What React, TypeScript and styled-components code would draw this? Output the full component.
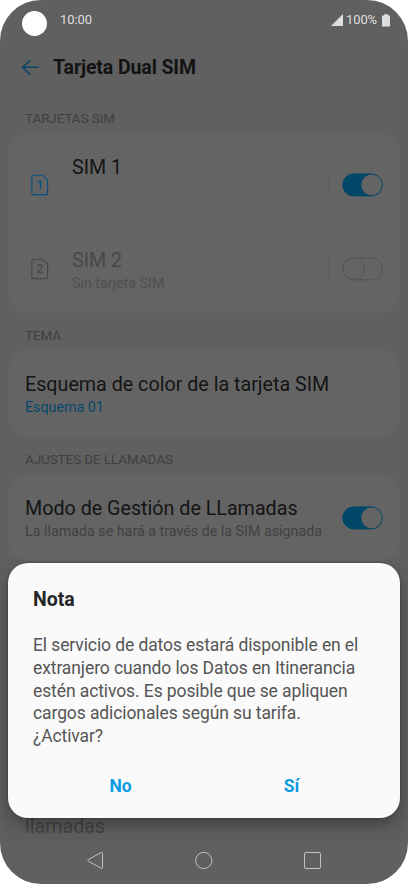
import React from "react";
import styled, { createGlobalStyle } from "styled-components";

const GlobalStyle = createGlobalStyle`
  * { box-sizing: border-box; }
  html, body { margin: 0; padding: 0; background: #fff; }
  body { font-family: Roboto, "Liberation Sans", sans-serif; overflow: hidden; }
`;

const Phone = styled.div`
  position: relative;
  display: flex;
  flex-direction: column;
  width: 408px;
  height: 884px;
  overflow: hidden;
  border-radius: 41px;
  background: #606060;
`;

const StatusBar = styled.header`
  display: flex;
  align-items: center;
  flex: none;
  height: 40px;
  padding: 0 17px 0 22px;
  color: #dedede;
  font-size: 13px;
  line-height: 16px;
`;

const Camera = styled.span`
  width: 25px;
  height: 25px;
  margin: 6px 13px 0 0;
  border-radius: 50%;
  background: #fff;
`;

const Clock = styled.span`
  flex: 1;
  font-size: 13px;
  letter-spacing: -0.1px;
`;

const Battery = styled.span`
  width: 31px;
  margin: 0 5px 0 3px;
  white-space: nowrap;
  font-size: 13px;
  letter-spacing: -0.1px;
`;

const TitleBar = styled.div`
  display: flex;
  align-items: center;
  flex: none;
  height: 56px;
  padding-left: 21px;
  gap: 13px;
`;

const PageTitle = styled.h1`
  margin: 0;
  color: #131313;
  font-size: 19.5px;
  line-height: 24px;
  letter-spacing: -0.1px;
  font-weight: 700;
`;

const SectionLabel = styled.h2<{ $height: number }>`
  display: flex;
  align-items: flex-end;
  flex: none;
  height: ${(p) => p.$height}px;
  margin: 0;
  padding: 0 25px 7px;
  color: #3f3f3f;
  font-size: 13.5px;
  line-height: 16px;
  letter-spacing: -0.1px;
  font-weight: 400;
`;

const Card = styled.section<{ $height: number }>`
  display: flex;
  flex-direction: column;
  flex: none;
  height: ${(p) => p.$height}px;
  margin: 0 8px;
  border-radius: 21px;
  background: #646464;
`;

const SimRow = styled.div<{ $height: number; $top: number }>`
  display: grid;
  grid-template-columns: 47px 1fr 14px 41px;
  height: ${(p) => p.$height}px;
  padding: ${(p) => p.$top}px 17px 0;
`;

const SimIconCell = styled.div`
  padding: 18px 0 0 6px;
`;

const Divider = styled.div`
  flex: none;
  height: 1px;
  margin: 0 18px 0 62px;
  background: #606060;
`;

const SwitchRule = styled.div`
  width: 1px;
  height: 28px;
  margin-top: 15px;
  background: #5f5f5f;
`;

const SwitchCell = styled.div`
  padding-top: 17px;
`;

const SettingRow = styled.div`
  display: flex;
  align-items: center;
  justify-content: space-between;
  height: 87px;
  padding: 0 17px;
`;

const TextStack = styled.div<{ $top?: number }>`
  padding-top: ${(p) => p.$top ?? 3}px;
  white-space: nowrap;
`;

const ItemTitle = styled.div<{ $muted?: boolean }>`
  color: ${(p) => (p.$muted ? "#484848" : "#141414")};
  font-size: 19.7px;
  line-height: 24px;
`;

const ItemDetail = styled.div<{ $color: string }>`
  color: ${(p) => p.$color};
  font-size: 14.27px;
  line-height: 20px;
`;

const HiddenTop = styled.div`
  flex: 1;
`;

const LastItem = styled.div`
  flex: none;
  height: 22px;
  padding: 0 17px;
`;

const NavBar = styled.nav`
  display: flex;
  justify-content: space-between;
  flex: none;
  padding: 14px 86px 0;
`;

const Dialog = styled.section`
  position: absolute;
  left: 8px;
  right: 8px;
  top: 563px;
  height: 254.5px;
  display: flex;
  flex-direction: column;
  border-radius: 20px;
  background: #fafafa;
  box-shadow: 0 0 2px rgba(0, 0, 0, 0.35), 0 10px 18px rgba(0, 0, 0, 0.34);
`;

const DialogTitle = styled.h2`
  margin: 25px 25px 0;
  color: #262626;
  font-size: 19.5px;
  line-height: 24px;
  font-weight: 700;
`;

const DialogText = styled.p`
  margin: 22px 25px 0;
  color: #555;
  font-size: 17.5px;
  line-height: 22.75px;
  letter-spacing: -0.1px;
  white-space: nowrap;
`;

const DialogActions = styled.div`
  display: grid;
  grid-template-columns: 171px 171px;
  margin: 26px 27px 0;
`;

const DialogButton = styled.button`
  padding: 0;
  border: 0;
  background: none;
  color: #0a9be3;
  font: 700 17.5px/24px Roboto, sans-serif;
`;

function Switch({ on = false }: { on?: boolean }) {
  return (
    <svg width="41" height="24" viewBox="0 0 41 24" fill="none" display="block">
      <rect x="0.8" y="0.9" width="39.5" height="22" rx="11" fill={on ? "#004768" : "none"} stroke={on ? "#004768" : "#535353"} strokeWidth={on ? 1 : 0.9} />
      <circle cx={on ? 29.6 : 11.7} cy="11.9" r={on ? 10.3 : 10.8} fill="#646464" stroke={on ? "none" : "#535353"} strokeWidth="0.9" />
    </svg>
  );
}

function SimIcon({ label, color }: { label: string; color: string }) {
  return (
    <svg width="18" height="22" viewBox="0 0 18 22" fill="none" display="block">
      <path d="M2 1.2h9.7L16.6 6v13.3q0 1.3-1.3 1.3H2.2q-1.3 0-1.3-1.3V2.2q0-1 1.1-1Z" stroke={color} strokeWidth="1.1" />
      <text x="8.8" y="15.3" textAnchor="middle" fill={color} fontFamily="Roboto" fontSize="12" fontWeight="500">{label}</text>
    </svg>
  );
}

export default function App() {
  return (
    <>
      <GlobalStyle />
      <Phone>
        <StatusBar>
          <Camera />
          <Clock>10:00</Clock>
          <svg width="12" height="12" viewBox="0 0 12 12"><path d="M0 12 12 0v12Z" fill="#dedede" /></svg>
          <Battery>100%</Battery>
          <svg width="9" height="13" viewBox="0 0 9 13"><path d="M0 1.5h2V.3h4v1.2h2v11H0Z" fill="#dedede" /></svg>
        </StatusBar>
        <TitleBar>
          <svg width="19" height="18" viewBox="0 0 19 18" fill="none"><path d="M9.4 1.2 1.6 8.3l7.8 7.6M1.6 8.3h16" stroke="#084563" strokeWidth="1.5" /></svg>
          <PageTitle>Tarjeta Dual SIM</PageTitle>
        </TitleBar>
        <SectionLabel $height={36.5}>TARJETAS SIM</SectionLabel>
        <Card $height={180}>
          <SimRow $height={98.5} $top={23.5}>
            <SimIconCell><SimIcon label="1" color="#074f80" /></SimIconCell>
            <ItemTitle>SIM 1</ItemTitle>
            <SwitchRule />
            <SwitchCell><Switch on /></SwitchCell>
          </SimRow>
          <Divider />
          <SimRow $height={80} $top={8}>
            <SimIconCell><SimIcon label="2" color="#474747" /></SimIconCell>
            <TextStack $top={9}>
              <ItemTitle $muted>SIM 2</ItemTitle>
              <ItemDetail $color="#505050">Sin tarjeta SIM</ItemDetail>
            </TextStack>
            <SwitchRule />
            <SwitchCell><Switch /></SwitchCell>
          </SimRow>
        </Card>
        <SectionLabel $height={37.5}>TEMA</SectionLabel>
        <Card $height={87}>
          <SettingRow>
            <TextStack>
              <ItemTitle>Esquema de color de la tarjeta SIM</ItemTitle>
              <ItemDetail $color="#04496b">Esquema 01</ItemDetail>
            </TextStack>
          </SettingRow>
        </Card>
        <SectionLabel $height={37}>AJUSTES DE LLAMADAS</SectionLabel>
        <Card $height={87}>
          <SettingRow>
            <TextStack>
              <ItemTitle>Modo de Gestión de LLamadas</ItemTitle>
              <ItemDetail $color="#414141">La llamada se hará a través de la SIM asignada</ItemDetail>
            </TextStack>
            <Switch on />
          </SettingRow>
        </Card>
        <SectionLabel $height={37} />
        <Card $height={239}>
          <HiddenTop />
          <LastItem><ItemTitle $muted>llamadas</ItemTitle></LastItem>
        </Card>
        <NavBar>
          <svg width="18" height="19" viewBox="0 0 18 19" fill="none"><path d="M15.1 1.5 2.4 8.6q-1.2.8 0 1.6l12.7 7q1.4.7 1.4-.8v-14q0-1.5-1.4-.9Z" stroke="#c2c2c2" /></svg>
          <svg width="18" height="19" viewBox="0 0 18 19" fill="none"><circle cx="8.8" cy="9.5" r="8.1" stroke="#c2c2c2" /></svg>
          <svg width="18" height="19" viewBox="0 0 18 19" fill="none"><rect x=".5" y="1.5" width="16" height="16" rx="1.5" stroke="#c2c2c2" /></svg>
        </NavBar>
        <Dialog role="dialog">
          <DialogTitle>Nota</DialogTitle>
          <DialogText>
            El servicio de datos estará disponible en el<br />
            extranjero cuando los Datos en Itinerancia<br />
            estén activos. Es posible que se apliquen<br />
            cargos adicionales según su tarifa.<br />
            ¿Activar?
          </DialogText>
          <DialogActions>
            <DialogButton>No</DialogButton>
            <DialogButton>Sí</DialogButton>
          </DialogActions>
        </Dialog>
      </Phone>
    </>
  );
}
